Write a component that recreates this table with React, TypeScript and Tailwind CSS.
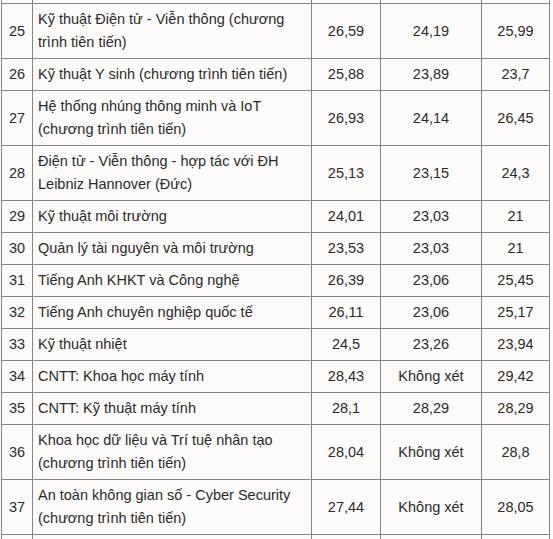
import React from 'react';

type Row = [string, string, string, string, string];

const rows: Row[] = [
  ['25', 'Kỹ thuật Điện tử - Viễn thông (chương trình tiên tiến)', '26,59', '24,19', '25,99'],
  ['26', 'Kỹ thuật Y sinh (chương trình tiên tiến)', '25,88', '23,89', '23,7'],
  ['27', 'Hệ thống nhúng thông minh và IoT (chương trình tiên tiến)', '26,93', '24,14', '26,45'],
  ['28', 'Điện tử - Viễn thông - hợp tác với ĐH Leibniz Hannover (Đức)', '25,13', '23,15', '24,3'],
  ['29', 'Kỹ thuật môi trường', '24,01', '23,03', '21'],
  ['30', 'Quản lý tài nguyên và môi trường', '23,53', '23,03', '21'],
  ['31', 'Tiếng Anh KHKT và Công nghệ', '26,39', '23,06', '25,45'],
  ['32', 'Tiếng Anh chuyên nghiệp quốc tế', '26,11', '23,06', '25,17'],
  ['33', 'Kỹ thuật nhiệt', '24,5', '23,26', '23,94'],
  ['34', 'CNTT: Khoa học máy tính', '28,43', 'Không xét', '29,42'],
  ['35', 'CNTT: Kỹ thuật máy tính', '28,1', '28,29', '28,29'],
  ['36', 'Khoa học dữ liệu và Trí tuệ nhân tạo (chương trình tiên tiến)', '28,04', 'Không xét', '28,8'],
  ['37', 'An toàn không gian số - Cyber Security (chương trình tiên tiến)', '27,44', 'Không xét', '28,05'],
];

const cell = 'border border-[#858585] px-[5px] py-[4px] align-middle';

export default function App() {
  return (
    <div className="h-[539px] w-[553px] overflow-hidden bg-[#fcfbf9] font-['Liberation_Sans',Arial,sans-serif] text-[14.5px] leading-[23px] text-[#2b2b2b]">
      <table className="ml-[1px] mt-[-49px] table-fixed border-collapse">
        <colgroup>
          <col className="w-[31px]" />
          <col className="w-[279px]" />
          <col className="w-[69px]" />
          <col className="w-[101px]" />
          <col className="w-[68px]" />
        </colgroup>
        <tbody>
          <tr>
            <td className={cell + ' h-[52px]'}></td>
            <td className={cell}></td>
            <td className={cell}></td>
            <td className={cell}></td>
            <td className={cell}></td>
          </tr>
          {rows.map((r) => (
            <tr key={r[0]}>
              <td className={cell + ' px-[3px] text-center'}>{r[0]}</td>
              <td className={cell}>{r[1]}</td>
              <td className={cell + ' text-center'}>{r[2]}</td>
              <td className={cell + ' text-center'}>{r[3]}</td>
              <td className={cell + ' text-center'}>{r[4]}</td>
            </tr>
          ))}
          {/* next row, only its top edge is in view */}
          <tr>
            <td className={cell + ' h-[32px]'}></td>
            <td className={cell}></td>
            <td className={cell}></td>
            <td className={cell}></td>
            <td className={cell}></td>
          </tr>
        </tbody>
      </table>
    </div>
  );
}
